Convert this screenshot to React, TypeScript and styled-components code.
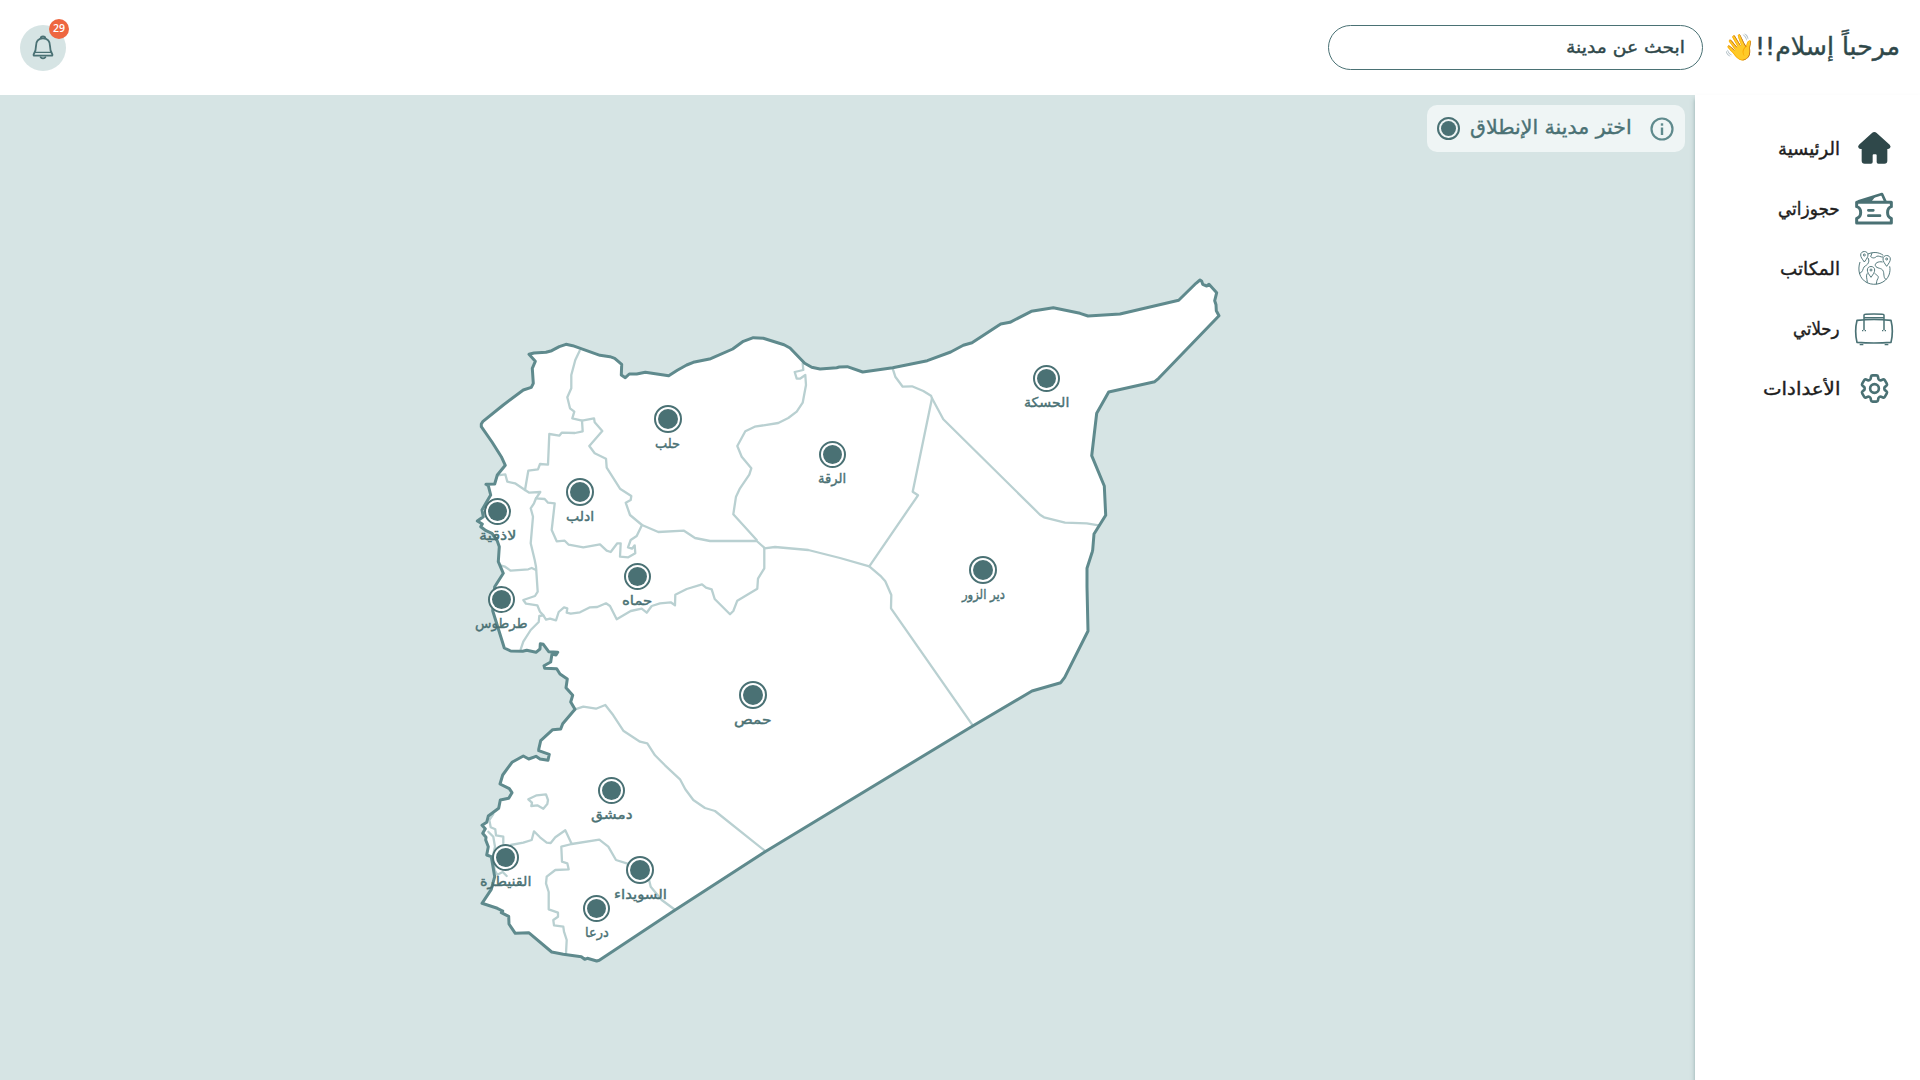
import React, { useLayoutEffect, useRef, useState } from "react";
import styled, { createGlobalStyle } from "styled-components";
import { HiOutlineCog6Tooth } from "react-icons/hi2";

const color = {
  ink: "#2f484a",
  teal: "#4a7174",
  coast: "#5f8a8d",
  border: "#b9d0d1",
  canvas: "#d6e4e4",
  card: "#eff5f5",
  accent: "#ee6640",
};

const GlobalStyle = createGlobalStyle`
  * { box-sizing: border-box; }
  body {
    margin: 0;
    background: #fff;
    font-family: "DejaVu Sans", "Noto Sans", sans-serif;
  }
`;

const Page = styled.div`
  display: flex;
  flex-direction: column;
  width: 1920px;
  height: 1080px;
  overflow: hidden;
  direction: rtl;
`;

const Header = styled.header`
  display: flex;
  align-items: center;
  flex: 0 0 95px;
  padding: 0 20px 0 20px;
  background: #fff;
`;

const Greeting = styled.h1`
  display: flex;
  align-items: center;
  width: 175px;
  margin: 0 0 0 22px;
  padding-bottom: 2px;
  font-size: 25px;
  font-weight: 400;
  line-height: 36px;
  color: ${color.ink};
`;

const Marks = styled.span`
  letter-spacing: -4px;
`;

const Wave = styled.span`
  font-family: "Noto Color Emoji", sans-serif;
  font-size: 26px;
  line-height: 36px;
`;

const SearchBox = styled.div`
  display: flex;
  align-items: center;
  width: 375px;
  height: 45px;
  padding: 0 17px 2px;
  border: 1px solid ${color.teal};
  border-radius: 23px;
  font-size: 17px;
  color: ${color.ink};
`;

const BellButton = styled.button`
  position: relative;
  display: flex;
  align-items: center;
  justify-content: center;
  width: 46px;
  height: 46px;
  margin: 0 auto 0 0;
  padding: 0 0 1px;
  border: 0;
  border-radius: 50%;
  background: ${color.canvas};
`;

const Badge = styled.span`
  position: absolute;
  top: -6px;
  right: -3px;
  width: 20px;
  height: 20px;
  border-radius: 50%;
  background: ${color.accent};
  color: #fff;
  font: 600 10.5px/19px "Open Sans", sans-serif;
  text-align: center;
`;

const Body = styled.div`
  display: flex;
  flex: 1;
  min-height: 0;
`;

const Sidebar = styled.nav`
  position: relative;
  z-index: 1;
  display: flex;
  flex-direction: column;
  flex: 0 0 225px;
  padding: 23px 26px 0 0;
  background: #fff;
  box-shadow: 0 4px 4px rgba(74, 113, 116, 0.5);
`;

const NavItem = styled.a`
  display: flex;
  align-items: center;
  gap: 14px;
  height: 60px;
  font-size: 18px;
  color: #1d1d1d;
`;

const NavIcon = styled.span`
  display: flex;
  align-items: center;
  justify-content: center;
  width: 40px;
  color: ${color.teal};

  .gear {
    stroke-width: 1.8;
  }
`;

const MapArea = styled.main`
  position: relative;
  flex: 1;
  padding: 10px;
  background: ${color.canvas};
`;

const Hint = styled.div`
  display: flex;
  align-items: center;
  width: 258px;
  height: 47px;
  padding: 0 11px 0 10px;
  border-radius: 10px;
  background: ${color.card};
  color: ${color.teal};
  font-size: 20px;
`;

const HintText = styled.div`
  display: flex;
  padding-bottom: 3px;
  margin: 0 18px 0 auto;
`;

const MapDrawing = styled.svg`
  position: absolute;
  inset: 0;
`;

const Pin = styled.div<{ $x: number; $y: number; $size: number }>`
  position: absolute;
  left: ${(p) => p.$x - 40}px;
  top: ${(p) => p.$y - 95 - p.$size / 2}px;
  display: flex;
  flex-direction: column;
  align-items: center;
  width: 80px;
  color: ${color.teal};
  font-size: 13.5px;
  line-height: 21px;
`;

const Marker = styled.span<{ $size: number; $dot: number; $fill: string }>`
  display: flex;
  align-items: center;
  justify-content: center;
  width: ${(p) => p.$size}px;
  height: ${(p) => p.$size}px;
  border: 2px solid ${color.teal};
  border-radius: 50%;
  background: ${(p) => p.$fill};
  &::after {
    content: "";
    width: ${(p) => p.$dot}px;
    height: ${(p) => p.$dot}px;
    border-radius: 50%;
    background: ${color.teal};
  }
`;

const FitBox = styled.span<{ $width: number }>`
  display: inline-flex;
  justify-content: flex-start;
  width: ${(p) => p.$width}px;
  white-space: nowrap;
`;

const FitInner = styled.span`
  flex: none;
  transform-origin: right center;
  -webkit-text-stroke: 0.4px currentColor;
`;

/** Single-line text that condenses or widens to fill a fixed width. */
function Fit({ width, children }: { width: number; children: React.ReactNode }) {
  const ref = useRef<HTMLSpanElement>(null);
  const [scale, setScale] = useState(1);
  useLayoutEffect(() => {
    if (ref.current) setScale(width / ref.current.offsetWidth);
  }, [width]);
  return (
    <FitBox $width={width}>
      <FitInner ref={ref} style={{ transform: `scaleX(${scale})` }}>
        {children}
      </FitInner>
    </FitBox>
  );
}

const HomeIcon = () => (
  <svg width="37" height="36" viewBox="0 0 111 108">
    <path
      fill={color.ink}
      d="M55 6Q59 6 62 9L101 44Q106 50 102 54Q98 58 94 57V92Q94 101 85 101H67Q62 101 62 96V76Q62 73 59 73H53Q50 73 50 76V96Q50 101 45 101H26Q17 101 17 92V57Q11 58 8 54Q4 50 9 44L48 9Q51 6 55 6Z"
    />
  </svg>
);

const TicketIcon = () => (
  <svg width="40" height="35" viewBox="0 0 120 105" fill="none" stroke="currentColor" strokeWidth="8" strokeLinejoin="round" strokeLinecap="round">
    <path d="M8 34H112V47C97 51 97 78 112 82V96H8V82C24 78 24 51 8 47Z" strokeWidth="9" />
    <path d="M14 31L84 9L94 31" />
    <path d="M14 32L66 14L52 32Z" fill="currentColor" stroke="none" />
    <path d="M43 58H58M43 74H78" />
  </svg>
);

const GlobeIcon = () => (
  <svg width="37" height="36" viewBox="0 0 111 108" fill="none" stroke="currentColor" strokeWidth="2.8" strokeLinejoin="round">
    <path d="M12 36C4 60 10 86 33 98C58 110 90 99 99 75C102 66 103 58 101 49M36 12C52 5 68 6 82 16" />
    <path d="M25 36C18 26 14 21 14 15C14 1 36 1 36 15C36 21 32 26 25 36Z" />
    <circle cx="25" cy="15" r="3" />
    <path d="M92 49C85 39 81 34 81 27C81 13 103 13 103 27C103 34 99 39 92 49Z" />
    <circle cx="92" cy="27" r="3" />
    <path d="M45 82C38 72 34 67 34 60C34 46 56 46 56 60C56 67 52 72 45 82Z" />
    <circle cx="45" cy="60" r="3" />
    <path d="M36 24C41 32 38 42 29 47C20 51 23 60 16 67L9 71M48 9L44 20C51 26 57 24 62 19C68 16 74 22 81 21M80 36C66 33 56 40 58 47C62 57 78 52 82 64C85 74 82 86 91 88M34 70C29 77 33 84 34 98M56 70C60 75 70 77 66 85C61 93 62 98 61 103" />
  </svg>
);

const BagIcon = () => (
  <svg width="40" height="35" viewBox="0 0 120 105" fill="none" stroke="currentColor" strokeWidth="5" strokeLinejoin="round">
    <path d="M9 28Q60 23 111 28Q119 60 111 94Q60 98 9 94Q1 60 9 28Z" />
    <path d="M30 57V13Q30 10 34 10Q60 8 86 10Q90 10 90 13V57M30 20H90" strokeWidth="4.5" />
    <path d="M24 59H28M32 59H36M84 59H88M92 59H96M17 101H28M92 101H103" strokeWidth="3.5" />
  </svg>
);

const BellIcon = () => (
  <svg width="22" height="26" viewBox="0 0 66 78" fill="none" stroke={color.teal} strokeWidth="5.5" strokeLinejoin="round" strokeLinecap="round">
    <path d="M26 14C26 5 40 5 40 14M33 13C18 13 12 23 12 36C12 49 11 53 5 61Q4 65 7 65H59Q62 65 61 61C55 53 54 49 54 36C54 23 48 13 33 13Z" />
    <path d="M10 55H56" strokeWidth="4" />
    <path d="M26 70Q33 76 40 70" />
  </svg>
);

const InfoIcon = () => (
  <svg width="24" height="24" viewBox="0 0 24 24" fill="none" stroke={color.coast} strokeWidth="2.2">
    <circle cx="12" cy="12" r="10.5" />
    <path d="M12 10.5V18" strokeWidth="2.4" />
    <path d="M12 6.3V8.7" strokeWidth="2.4" />
  </svg>
);

type Pt = [number, number];

/** Converts one survey sheet (three units per pixel, own origin) to map coordinates. */
const sheet =
  (ox: number, oy: number) =>
  (text: string): Pt[] =>
    text.split(" ").map((pair) => {
      const [x, y] = pair.split(",").map(Number);
      return [ox + x / 3, oy - 95 + y / 3] as Pt;
    });

const north = sheet(460, 320);
const middle = sheet(460, 520);
const south = sheet(460, 740);
const northEast = sheet(820, 260);
const southEast = sheet(820, 540);

const toPath = (pts: Pt[]) => "M" + pts.map(([x, y]) => `${x.toFixed(1)} ${y.toFixed(1)}`).join("L");

const coast = [
  ...north(
    "207,103 222,99 258,97 275,92 298,80 318,73 338,77 420,106 450,110 464,115 485,133 484,165 496,173 508,162 530,162 556,157 626,167 652,151 680,135 700,127 752,116 818,87 850,64 880,53 910,55 972,74 990,84 1034,130 1055,142 1080,147"
  ),
  ...northEast(
    "50,323 58,321 82,320 128,336 218,323 322,302 392,276 430,256 456,248 542,192 570,187 634,154 700,143 780,160 804,168 900,162 1076,121 1128,70 1140,60 1145,64 1148,73 1160,78 1167,73 1190,98 1184,122 1188,134 1189,152 1197,167 1016,355 1004,365 866,396 830,460 815,587 853,678 857,766 822,822 818,870"
  ),
  ...southEast("817,35 801,85 801,140 804,273 734,412 722,428 636,453 458,558"),
  ...south(
    "914,336 644,511 418,661 410,663 382,655 374,658 364,650 310,643 275,636 206,578 166,580 147,552 146,529 124,518 128,513 112,505 66,490 94,448 104,410 94,350 80,345 85,320 77,300 78,292 68,280 76,266 66,256 80,247 85,228 116,205 121,180 146,175 156,158 148,146 120,132 128,105 156,67 190,48 206,57 228,49 240,57 264,61 268,43 236,32"
  ),
  ...middle(
    "236,688 242,662 278,629 302,627 308,611 345,568 332,546 338,526 318,503 322,477 300,462 290,446 254,445 252,437 272,426 276,402 288,405 293,397 266,395 250,373 241,371 240,387 228,397 200,391 188,394 152,393 133,384 98,272 104,200 130,160 115,125 118,80"
  ),
  ...north(
    "112,663 96,640 78,632 62,620 67,612 52,603 70,590 66,570 80,545 92,525 85,497 78,493 104,492 112,465 136,436 124,410 96,366 64,320 64,312 68,305 130,255 190,210 214,202 220,190 217,145 226,124 207,103"
  ),
];

const borders: Pt[][] = [
  north(
    "359,92 346,120 334,165 334,205 322,232 330,265 343,275 337,295 366,302 402,295 404,307 427,333 388,378 404,400 438,416 440,443 480,506 514,528 512,540 497,548 510,585 546,615 595,636 672,632 705,654 750,663 890,663 913,683"
  ),
  north("366,302 368,334 345,339 305,338 298,347 268,342 264,434 240,432 234,448 205,452 195,510"),
  north(
    "113,466 136,463 142,485 165,490 195,510 208,518 241,516 228,535 254,537 264,548 284,550 275,630 290,664 314,662 326,674 370,682 420,673 440,692 452,696 472,670 482,670 480,710 505,712 526,700 524,676 516,686 504,682 512,660 530,648 546,615"
  ),
  [
    ...north("228,535 222,550 212,565 219,590 212,670"),
    ...middle("224,120 228,140 233,215 225,228 190,240 198,251 232,256 240,275 250,286"),
  ],
  middle("121,136 135,140 152,152 205,148 215,144 228,150"),
  middle(
    "182,388 190,365 212,330 236,306 238,288 250,286 258,299 270,296 288,301 296,276 312,262 322,265 320,278 332,281 360,277 390,262 412,261 438,250 450,258 470,298 512,273 545,266 560,278 575,258 600,250 632,247 645,256 646,224 680,207 726,193 738,203 755,208 764,237 810,283 820,273 832,242 892,206 894,176 913,145 913,85"
  ),
  [...middle("913,85 945,81 1045,90"), ...southEast("60,54 148,79 184,110 196,124 214,165 213,205 458,556")],
  north(
    "1028,130 1030,150 1004,156 1010,176 1020,176 1036,165 1038,195 1028,248 1010,275 985,294 955,309 884,320 856,334 832,378 845,410 874,445 868,464 840,505 828,530 820,583 890,660"
  ),
  northEast("218,326 226,350 248,380 276,379 310,393 333,407 336,415 278,695 294,706 148,919"),
  northEast("336,415 370,478 660,764 672,772 735,788 800,790 836,796"),
  [
    ...middle("345,568 370,560 408,566 436,555 460,586 490,632 540,665 562,670"),
    ...south("585,46 615,76 660,118 676,148 700,180 735,204 765,213 914,332"),
  ],
  south("205,178 230,166 258,163 264,180 262,192 250,206 232,196 214,198 216,188 205,178"),
  south(
    "152,315 190,308 215,300 222,274 240,292 260,308 272,309 286,292 316,271 335,312 418,299 445,320 468,360 500,370 560,390 572,440 605,480 643,508"
  ),
  south(
    "335,312 304,320 306,365 322,370 326,388 286,390 260,410 258,430 266,456 266,508 294,518 294,530 280,540 282,556 310,560 312,575 320,600 318,640"
  ),
  south("100,222 88,240 92,262 106,268 108,286 130,290 130,310"),
  south("85,275 100,290 105,320 98,350 104,390 112,404 128,396 140,408"),
];

const cities = [
  { name: "حلب", x: 668, y: 419, w: 25, size: 28 },
  { name: "ادلب", x: 580, y: 492, w: 28, size: 28 },
  { name: "لاذقية", x: 497.5, y: 511.5, w: 37, size: 27 },
  { name: "حماه", x: 637.5, y: 576.5, w: 30, size: 27 },
  { name: "طرطوس", x: 501.5, y: 599.5, w: 52, size: 27 },
  { name: "حمص", x: 753, y: 695, w: 38, size: 28 },
  { name: "دمشق", x: 611.5, y: 790.5, w: 42, size: 27 },
  { name: "القنيطرة", x: 505.5, y: 857.5, w: 51, size: 27 },
  { name: "السويداء", x: 640, y: 870, w: 53, size: 28 },
  { name: "درعا", x: 596.5, y: 908.5, w: 24, size: 27 },
  { name: "الحسكة", x: 1046.5, y: 378.5, w: 45, size: 27 },
  { name: "الرقة", x: 832.5, y: 454.5, w: 28, size: 27 },
  { name: "دير الزور", x: 983, y: 570, w: 43, size: 28 },
];

const nav = [
  { label: "الرئيسية", w: 62, icon: <HomeIcon /> },
  { label: "حجوزاتي", w: 62, icon: <TicketIcon /> },
  { label: "المكاتب", w: 60, icon: <GlobeIcon /> },
  { label: "رحلاتي", w: 47, icon: <BagIcon /> },
  { label: "الأعدادات", w: 77, icon: <HiOutlineCog6Tooth className="gear" size={35} /> },
];

export default function App() {
  return (
    <Page>
      <GlobalStyle />
      <Header>
        <Greeting>
          <Fit width={145}>
            مرحباً إسلام<Marks>!!</Marks>
          </Fit>
          <Wave>👋</Wave>
        </Greeting>
        <SearchBox>
          <Fit width={119}>ابحث عن مدينة</Fit>
        </SearchBox>
        <BellButton>
          <BellIcon />
          <Badge>29</Badge>
        </BellButton>
      </Header>
      <Body>
        <Sidebar>
          {nav.map((item) => (
            <NavItem key={item.label}>
              <NavIcon>{item.icon}</NavIcon>
              <Fit width={item.w}>{item.label}</Fit>
            </NavItem>
          ))}
        </Sidebar>
        <MapArea>
          <Hint>
            <InfoIcon />
            <HintText>
              <Fit width={162}>اختر مدينة الإنطلاق</Fit>
            </HintText>
            <Marker $size={23} $dot={15} $fill="transparent" />
          </Hint>
          <MapDrawing width="1695" height="985" viewBox="0 0 1695 985" fill="none" strokeLinejoin="round" strokeLinecap="round">
            <path d={toPath(coast) + "Z"} fill="#fff" />
            {borders.map((line, i) => (
              <path key={i} d={toPath(line)} stroke={color.border} strokeWidth="2.3" />
            ))}
            <path d={toPath(coast) + "Z"} stroke={color.coast} strokeWidth="3" />
          </MapDrawing>
          {cities.map((city) => (
            <Pin key={city.name} $x={city.x} $y={city.y} $size={city.size}>
              <Marker $size={city.size} $dot={city.size - 8} $fill="#fff" />
              <Fit width={city.w}>{city.name}</Fit>
            </Pin>
          ))}
        </MapArea>
      </Body>
    </Page>
  );
}
